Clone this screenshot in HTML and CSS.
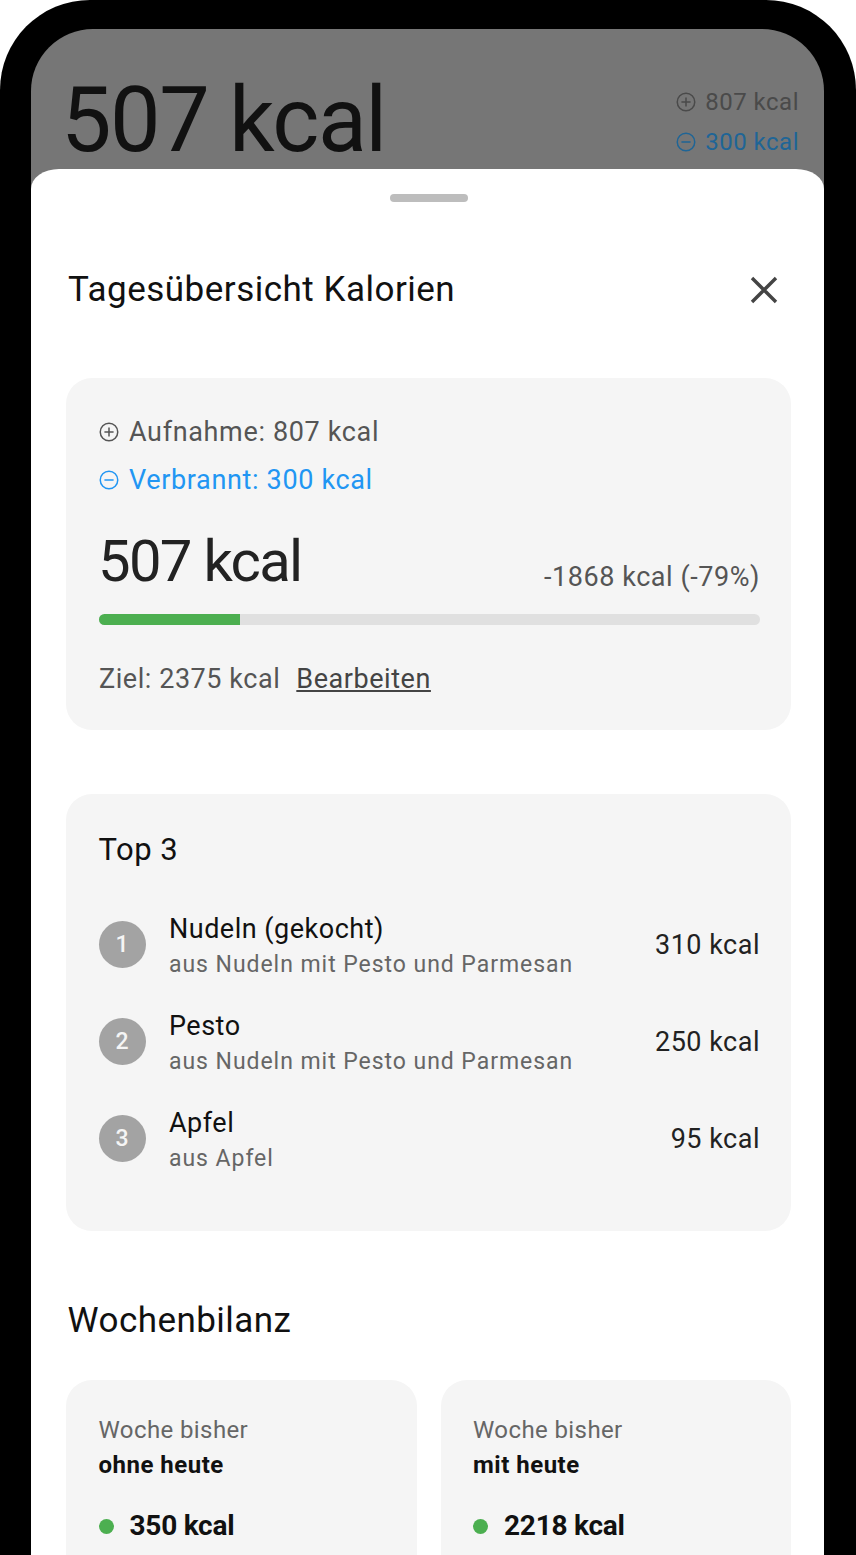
FILE: index.html
```html
<!DOCTYPE html>
<html lang="de">
<head>
    <meta charset="UTF-8">
    <meta name="viewport" content="width=device-width, initial-scale=1.0">
    <title>Tagesübersicht Kalorien</title>
    <link rel="stylesheet" href="styles.css">
</head>
<body>
<div class="phone">
    <div class="screen">
        <div class="behind">
            <div class="behind-total">507 kcal</div>
            <div class="behind-side">
                <div class="behind-line">
                    <svg class="icon-small" viewBox="0 0 24 24"><circle cx="12" cy="12" r="10.5"/><path d="M12 6.5v11M6.5 12h11"/></svg>
                    <span>807 kcal</span>
                </div>
                <div class="behind-line behind-blue">
                    <svg class="icon-small" viewBox="0 0 24 24"><circle cx="12" cy="12" r="10.5"/><path d="M6.5 12h11"/></svg>
                    <span>300 kcal</span>
                </div>
            </div>
        </div>

        <div class="sheet">
            <div class="handle"></div>
            <div class="sheet-head">
                <h1>Tagesübersicht Kalorien</h1>
                <svg class="close" viewBox="0 0 28 28"><path d="M2 2l24 24M26 2L2 26"/></svg>
            </div>

            <div class="card summary">
                <div class="line">
                    <svg class="icon-small" viewBox="0 0 24 24"><circle cx="12" cy="12" r="10.5"/><path d="M12 6.5v11M6.5 12h11"/></svg>
                    <span>Aufnahme: 807 kcal</span>
                </div>
                <div class="line line-blue">
                    <svg class="icon-small" viewBox="0 0 24 24"><circle cx="12" cy="12" r="10.5"/><path d="M6.5 12h11"/></svg>
                    <span>Verbrannt: 300 kcal</span>
                </div>
                <div class="total-row">
                    <div class="total">507 kcal</div>
                    <div class="diff">-1868 kcal (-79%)</div>
                </div>
                <div class="bar"><div class="bar-fill" style="width: 21.3%"></div></div>
                <div class="goal">
                    <span>Ziel: 2375 kcal</span>
                    <a class="edit">Bearbeiten</a>
                </div>
            </div>

            <div class="card top">
                <h2>Top 3</h2>
                <div class="item">
                    <div class="rank">1</div>
                    <div class="item-text">
                        <div class="item-name">Nudeln (gekocht)</div>
                        <div class="item-from">aus Nudeln mit Pesto und Parmesan</div>
                    </div>
                    <div class="item-kcal">310 kcal</div>
                </div>
                <div class="item">
                    <div class="rank">2</div>
                    <div class="item-text">
                        <div class="item-name">Pesto</div>
                        <div class="item-from">aus Nudeln mit Pesto und Parmesan</div>
                    </div>
                    <div class="item-kcal">250 kcal</div>
                </div>
                <div class="item">
                    <div class="rank">3</div>
                    <div class="item-text">
                        <div class="item-name">Apfel</div>
                        <div class="item-from">aus Apfel</div>
                    </div>
                    <div class="item-kcal">95 kcal</div>
                </div>
            </div>

            <h2 class="week-title">Wochenbilanz</h2>
            <div class="week">
                <div class="card week-card">
                    <div class="week-label">Woche bisher</div>
                    <div class="week-sub">ohne heute</div>
                    <div class="week-value"><i class="dot"></i>350 kcal</div>
                </div>
                <div class="card week-card">
                    <div class="week-label">Woche bisher</div>
                    <div class="week-sub">mit heute</div>
                    <div class="week-value"><i class="dot"></i>2218 kcal</div>
                </div>
            </div>
        </div>
    </div>
</div>
</body>
</html>
```

FILE: styles.css
```css
* {
    box-sizing: border-box;
}

html, body {
    margin: 0;
    height: 1555px;
    overflow: hidden;
    background: #fff;
    font-family: Roboto, "Liberation Sans", sans-serif;
}

.phone {
    height: 1555px;
    background: #000;
    border-radius: 90px 90px 0 0;
    padding: 29px 32px 0 31px;
}

.screen {
    height: 100%;
    background: #767676;
    border-radius: 62px 62px 0 0;
    overflow: hidden;
}

/* dimmed page behind the sheet */
.behind {
    height: 140px;
    padding: 0 25px 0 30px;
    display: flex;
    justify-content: space-between;
}

.behind-total {
    font-size: 90px;
    line-height: 105px;
    margin-top: 39px;
    letter-spacing: -1.5px;
    color: #111;
}

.behind-side {
    margin-top: 53px;
}

.behind-line {
    display: flex;
    align-items: center;
    gap: 9px;
    height: 40px;
    font-size: 24px;
    letter-spacing: 0.5px;
    color: #4a4a4a;
}

.behind-blue {
    color: #1f6596;
}

.icon-small {
    width: 20px;
    height: 20px;
    flex: none;
    fill: none;
    stroke: currentColor;
    stroke-width: 1.8;
}

.sheet {
    height: 1400px;
    background: #fff;
    border-radius: 28px 28px 0 0 / 20px 20px 0 0;
    padding: 25px 33px 0 35px;
}

.handle {
    width: 78px;
    height: 8px;
    border-radius: 4px;
    background: #bdbdbd;
    margin: 0 auto;
}

.sheet-head {
    display: flex;
    justify-content: space-between;
    align-items: center;
    margin-top: 65px;
    padding-left: 2px;
    padding-right: 13px;
}

h1 {
    margin: 0;
    font-size: 35px;
    font-weight: 400;
    line-height: 46px;
    letter-spacing: 0.5px;
    color: #111;
}

.close {
    width: 28px;
    height: 28px;
    fill: none;
    stroke: #444;
    stroke-width: 3.4;
}

.card {
    background: #f5f5f5;
    border-radius: 26px;
}

.summary {
    margin-top: 65px;
    height: 352px;
    padding: 30px 31px 0 33px;
}

.line {
    display: flex;
    align-items: center;
    gap: 10px;
    height: 48px;
    font-size: 27px;
    letter-spacing: 0.65px;
    color: #555;
}

.line-blue {
    color: #2196f3;
}

.total-row {
    display: flex;
    justify-content: space-between;
    align-items: flex-end;
    margin-top: 24px;
}

.total {
    margin-left: -1px;
    font-size: 58px;
    line-height: 66px;
    letter-spacing: -1.7px;
    color: #222;
}

.diff {
    margin-bottom: -1px;
    font-size: 27px;
    line-height: 36px;
    letter-spacing: 0.55px;
    color: #555;
}

.bar {
    height: 11px;
    margin-top: 20px;
    border-radius: 6px;
    background: #e0e0e0;
    overflow: hidden;
}

.bar-fill {
    height: 100%;
    background: #4caf50;
}

.goal {
    display: flex;
    gap: 16px;
    margin-top: 34px;
    font-size: 27px;
    line-height: 40px;
    letter-spacing: 0.55px;
    color: #555;
}

.edit {
    color: #444;
    text-decoration: underline;
}

.top {
    margin-top: 64px;
    height: 437px;
    padding: 34px 31px 0 32.5px;
}

h2 {
    margin: 0;
    font-size: 31px;
    font-weight: 400;
    line-height: 44px;
    letter-spacing: 0.5px;
    color: #111;
}

.item {
    display: flex;
    align-items: center;
    height: 97px;
}

.top h2 + .item {
    margin-top: 24px;
}

.rank {
    width: 47px;
    height: 47px;
    flex: none;
    border-radius: 50%;
    background: #a3a3a3;
    color: #f5f5f5;
    font-size: 23px;
    font-weight: 500;
    line-height: 47px;
    text-align: center;
    margin-right: 23.5px;
}

.item-text {
    flex: 1;
    padding-top: 3px;
}

.item-name {
    font-size: 27px;
    line-height: 38px;
    letter-spacing: 0.5px;
    color: #111;
}

.item-from {
    font-size: 23px;
    line-height: 34px;
    letter-spacing: 0.95px;
    color: #666;
}

.item-kcal {
    font-size: 27px;
    letter-spacing: 0.5px;
    color: #222;
}

.week-title {
    margin-top: 68px;
    padding-left: 1.5px;
    font-size: 35px;
    letter-spacing: 0.45px;
}

.week {
    display: grid;
    grid-template-columns: 1fr 1fr;
    gap: 24px;
    margin-top: 37px;
}

.week-card {
    height: 300px;
    padding: 33px 32px 0 32.5px;
}

.week-label {
    font-size: 24px;
    line-height: 34px;
    letter-spacing: 0.4px;
    color: #666;
}

.week-sub {
    font-size: 24px;
    font-weight: 700;
    line-height: 36px;
    letter-spacing: 0.5px;
    color: #111;
}

.week-value {
    display: flex;
    align-items: center;
    margin-top: 25px;
    font-size: 28px;
    font-weight: 700;
    line-height: 36px;
    letter-spacing: -0.25px;
    color: #111;
}

.dot {
    width: 15px;
    height: 15px;
    border-radius: 50%;
    background: #4caf50;
    margin-right: 16px;
}
```
